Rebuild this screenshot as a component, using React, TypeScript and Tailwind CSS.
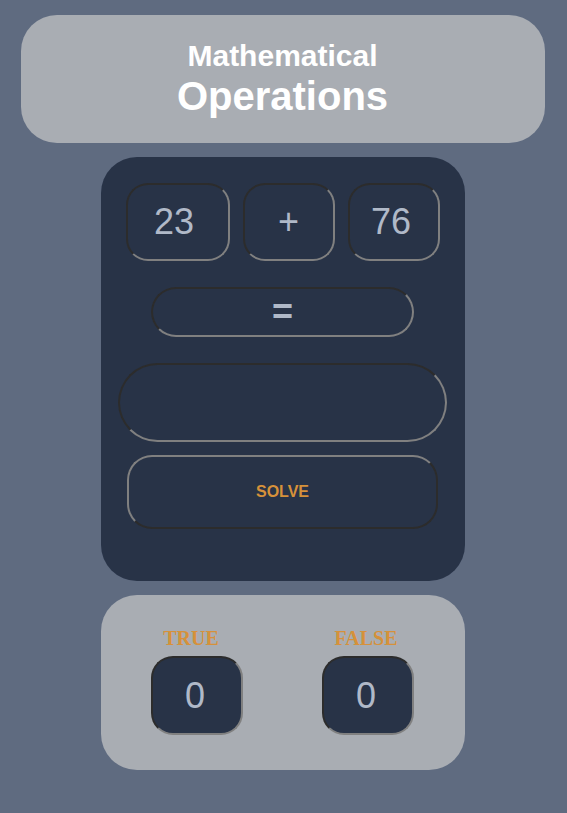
import React from "react";

const inset = "border-2 border-[#808080] [border-style:inset]";
const outset = "border-2 border-[#808080] [border-style:outset]";

function NumBox({ value, width, shift }: { value: string; width: string; shift: string }) {
  return (
    <div
      className={`${width} ${shift} h-[78px] rounded-[22px] ${inset} flex items-center justify-center text-[36px] text-[#b0b9c8]`}
    >
      {value}
    </div>
  );
}

function Counter({ label, value, shift }: { label: string; value: number; shift: string }) {
  return (
    <div className="flex flex-col items-center">
      <span
        className={`${shift} text-[20px] leading-[22px] font-bold text-[#d6913a] [font-family:'Liberation_Serif',serif]`}
      >
        {label}
      </span>
      <div
        className={`mt-[7px] w-[92px] h-[79px] pr-[4px] rounded-[22px] bg-[#283347] ${inset} flex items-center justify-center text-[36px] text-[#b0b9c8]`}
      >
        {value}
      </div>
    </div>
  );
}

export default function App() {
  return (
    <div className="min-h-[813px] bg-[#5f6b80] flex flex-col items-center pt-[15px] pr-[2px] [font-family:'Liberation_Sans',Arial,sans-serif]">
      <div className="w-[524px] h-[128px] rounded-[36px] bg-[#a9adb3] flex flex-col items-center justify-center text-white font-bold">
        <span className="text-[30px] leading-[34px]">Mathematical</span>
        <span className="text-[40px] leading-[46px]">Operations</span>
      </div>

      <div className="mt-[14px] w-[364px] h-[424px] rounded-[36px] bg-[#283347] flex flex-col items-center pt-[26px]">
        <div className="flex gap-[13px]">
          <NumBox value="23" width="w-[104px]" shift="pr-[7px]" />
          <NumBox value="+" width="w-[92px]" shift="pr-0" />
          <NumBox value="76" width="w-[92px]" shift="pr-[5px]" />
        </div>
        <div
          className={`mt-[26px] w-[263px] h-[50px] rounded-full ${inset} flex items-center justify-center text-[36px] font-bold text-[#b0b9c8]`}
        >
          =
        </div>
        <input
          className={`mt-[26px] w-[329px] h-[79px] rounded-[40px] bg-transparent ${inset} outline-none text-center text-[36px] text-[#b0b9c8]`}
        />
        <button
          className={`mt-[13px] w-[311px] h-[74px] rounded-[25px] bg-transparent ${outset} text-[16px] font-bold text-[#d6913a]`}
        >
          SOLVE
        </button>
      </div>

      <div className="mt-[14px] w-[364px] h-[175px] rounded-[36px] bg-[#a9adb3] flex justify-center gap-[79px] pt-[32px]">
        <Counter label="TRUE" value={0} shift="pr-[12px]" />
        <Counter label="FALSE" value={0} shift="pr-[4px]" />
      </div>
    </div>
  );
}
